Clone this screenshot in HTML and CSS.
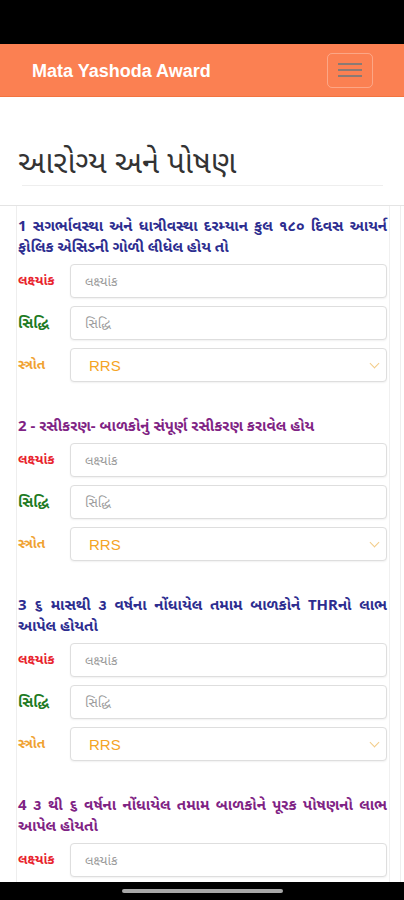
FILE: index.html
```html
<!DOCTYPE html>
<html lang="gu">
<head>
  <meta charset="UTF-8" />
  <meta name="viewport" content="width=device-width, initial-scale=1.0"/>
  <title>Mata Yashoda Award</title>
  <link rel="stylesheet" href="styles.css">
</head>
<body>
  <div class="status-bar"></div>
  <header class="navbar">
    <span class="brand">Mata Yashoda Award</span>
    <button class="toggler" aria-label="menu">
      <span></span><span></span><span></span>
    </button>
  </header>

  <div class="page-title">
    <h2>આરોગ્ય અને પોષણ</h2>
    <hr>
  </div>

  <div class="qtable">
    <div class="qcol">
      <div class="qcell">

        <div class="question">
          <p class="qtext odd">1 સગર્ભાવસ્થા અને ધાત્રીવસ્થા દરમ્યાન કુલ ૧૮૦ દિવસ આયર્ન ફોલિક એસિડની ગોળી લીધેલ હોય તો</p>
          <div class="row"><label class="lbl target">લક્ષ્યાંક</label><input type="text" placeholder="લક્ષ્યાંક"></div>
          <div class="row"><label class="lbl done">સિદ્ધિ</label><input type="text" placeholder="સિદ્ધિ"></div>
          <div class="row"><label class="lbl source">સ્ત્રોત</label><div class="select">RRS<span class="chev"></span></div></div>
        </div>

        <div class="question">
          <p class="qtext even">2 - રસીકરણ- બાળકોનું સંપૂર્ણ રસીકરણ કરાવેલ હોય</p>
          <div class="row"><label class="lbl target">લક્ષ્યાંક</label><input type="text" placeholder="લક્ષ્યાંક"></div>
          <div class="row"><label class="lbl done">સિદ્ધિ</label><input type="text" placeholder="સિદ્ધિ"></div>
          <div class="row"><label class="lbl source">સ્ત્રોત</label><div class="select">RRS<span class="chev"></span></div></div>
        </div>

        <div class="question">
          <p class="qtext odd">3 ૬ માસથી ૩ વર્ષના નોંધાયેલ તમામ બાળકોને THRનો લાભ આપેલ હોયતો</p>
          <div class="row"><label class="lbl target">લક્ષ્યાંક</label><input type="text" placeholder="લક્ષ્યાંક"></div>
          <div class="row"><label class="lbl done">સિદ્ધિ</label><input type="text" placeholder="સિદ્ધિ"></div>
          <div class="row"><label class="lbl source">સ્ત્રોત</label><div class="select">RRS<span class="chev"></span></div></div>
        </div>

        <div class="question">
          <p class="qtext even">4 ૩ થી ૬ વર્ષના નોંધાયેલ તમામ બાળકોને પૂરક પોષણનો લાભ આપેલ હોયતો</p>
          <div class="row"><label class="lbl target">લક્ષ્યાંક</label><input type="text" placeholder="લક્ષ્યાંક"></div>
          <div class="row"><label class="lbl done">સિદ્ધિ</label><input type="text" placeholder="સિદ્ધિ"></div>
          <div class="row"><label class="lbl source">સ્ત્રોત</label><div class="select">RRS<span class="chev"></span></div></div>
        </div>

      </div>
    </div>
  </div>

  <div class="nav-bar"><span class="pill"></span></div>
</body>
</html>
```

FILE: styles.css
```css
body {
  margin: 0;
  font-family: "Noto Sans", "Noto Sans Gujarati", "Liberation Sans", sans-serif;
  background: #fff;
  color: #333;
}

.status-bar {
  height: 44px;
  background: #000;
}

.navbar {
  display: flex;
  justify-content: space-between;
  align-items: center;
  height: 52px;
  padding: 0 31px 0 32px;
  background-color: #fb8052;
  border-bottom: 1px solid #f27440;
}

.brand {
  color: #fff;
  font-family: "Liberation Sans", Arial, sans-serif;
  font-weight: bold;
  font-size: 18px;
  margin-top: 3px;
}

.toggler {
  width: 46px;
  height: 35px;
  padding: 0;
  background: transparent;
  border: 1.5px solid rgba(255,255,255,0.3);
  border-radius: 5px;
  display: flex;
  flex-direction: column;
  justify-content: center;
  align-items: center;
  gap: 4px;
}

.toggler span {
  display: block;
  width: 24px;
  height: 2px;
  background: #8a7a74;
}

.page-title {
  padding: 0 21px 0 18px;
}

.page-title h2 {
  margin: 44px 0 0;
  font-size: 31px;
  font-weight: normal;
  line-height: 40px;
  color: #333;
}

.page-title hr {
  margin: 4px 0 0 4px;
  border: 0;
  border-top: 1px solid #eee;
}

.qtable {
  margin-top: 19px;
  border-top: 1px solid #e4e4e4;
}

.qcol {
  margin: 0 3px 0 16px;
  border-left: 1px solid #eee;
  border-right: 1px solid #eee;
}

.qcell {
  margin-right: 10px;
  border-right: 1px solid #f0f0f0;
  padding: 9px 2px 0 1px;
}

.question {
  margin-bottom: 33px;
}

.qtext {
  margin: 0 0 7px;
  font-size: 15px;
  font-weight: bold;
  line-height: 21px;
  text-align: justify;
}

.qtext.odd {
  color: #2d2d8f;
}

.qtext.even {
  color: #7f2384;
}

.row {
  display: flex;
  align-items: center;
  margin-bottom: 8px;
}

.lbl {
  width: 52px;
  flex-shrink: 0;
  font-size: 13.5px;
  font-weight: bold;
}

.lbl.target {
  color: #e8222c;
}

.lbl.done {
  color: #1d7a22;
  font-size: 14.5px;
}

.lbl.source {
  color: #f0a232;
  font-size: 13.5px;
}

.row input,
.select {
  flex: 1;
  box-sizing: border-box;
  height: 34px;
  border: 1px solid #dedede;
  border-radius: 4px;
  box-shadow: 0 1px 2px rgba(0,0,0,0.06);
  background: #fff;
  font-family: inherit;
}

.row input {
  padding: 0 14px;
  font-size: 13px;
}

.row input::placeholder {
  color: #9a9a9a;
}

.select {
  display: flex;
  align-items: center;
  justify-content: space-between;
  padding: 0 8px 0 18px;
  font-family: "Liberation Sans", Arial, sans-serif;
  font-size: 15px;
  color: #f5a425;
}

.chev {
  width: 6px;
  height: 6px;
  border-right: 1px solid #f3cc88;
  border-bottom: 1px solid #f3cc88;
  transform: rotate(45deg);
  margin-top: -4px;
}

.nav-bar {
  position: fixed;
  left: 0;
  right: 0;
  bottom: 0;
  height: 18px;
  background: #000;
  display: flex;
  justify-content: center;
  align-items: center;
}

.pill {
  width: 161px;
  height: 4px;
  border-radius: 2px;
  background: #a8a8a8;
}
```
